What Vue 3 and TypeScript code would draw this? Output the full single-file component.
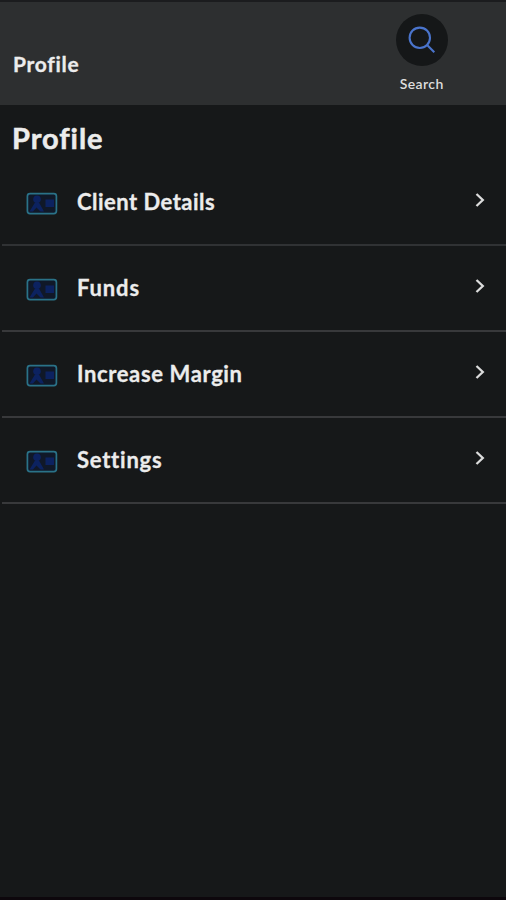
<script setup lang="ts">
interface MenuItem {
  label: string
  key: string
}

const items: MenuItem[] = [
  { label: 'Client Details', key: 'client' },
  { label: 'Funds', key: 'funds' },
  { label: 'Increase Margin', key: 'margin' },
  { label: 'Settings', key: 'settings' },
]
</script>

<template>
  <div class="screen">
    <header class="topbar">
      <span class="topbar-title">Profile</span>
      <button class="search" type="button">
        <span class="search-disc">
          <svg width="28" height="28" viewBox="0 0 28 28" fill="none" stroke="#4a74cc" stroke-width="2.1">
            <circle cx="11.8" cy="11.8" r="10.2" />
            <path d="M19.1 19L26.3 26.2" />
          </svg>
        </span>
        <span class="search-label">Search</span>
      </button>
    </header>
    <main class="content">
      <h1 class="heading">Profile</h1>
      <ul class="menu">
        <li v-for="item in items" :key="item.key" class="row">
          <svg class="card-icon" width="32" height="23" viewBox="0 0 32 23">
            <rect x="1.4" y="1.6" width="29" height="20" rx="2.6" fill="#101828" stroke="#2a7288" stroke-width="1.7" />
            <g fill="#0c2260">
              <circle cx="11" cy="7.3" r="3.8" />
              <path d="M3.5 19.5L9 10.5H13L18 19.5H14.5L10.5 15.5L7 19.5Z" />
              <path d="M19.5 7.5H28V15H19.5Z" />
            </g>
          </svg>
          <span class="label" :class="item.key">{{ item.label }}</span>
          <svg class="chevron" width="10" height="16" viewBox="0 0 10 16" fill="none" stroke="#dcdcdc" stroke-width="2.3">
            <path d="M1.5 2L7.8 8L1.5 14" />
          </svg>
        </li>
      </ul>
    </main>
  </div>
</template>

<style>
body {
  margin: 0;
  background: #161819;
}
</style>

<style scoped>
.screen {
  box-sizing: border-box;
  width: 100%;
  height: 900px;
  display: flex;
  flex-direction: column;
  overflow: hidden;
  border-top: 2px solid #1b1c1e;
  border-bottom: 3px solid #0d070c;
  background: #161819;
  color: #ececec;
  font-family: Lato, "Open Sans", sans-serif;
  font-weight: 700;
}
.topbar {
  box-sizing: border-box;
  height: 103px;
  display: flex;
  justify-content: space-between;
  align-items: flex-start;
  padding: 11.5px 56px 0 13px;
  background: #2d2f30;
}
.topbar-title {
  margin-top: 35.5px;
  font-size: 21px;
  line-height: 30px;
  letter-spacing: 0.7px;
  -webkit-text-stroke: 0.3px currentColor;
}
.search {
  width: 57px;
  display: flex;
  flex-direction: column;
  align-items: center;
  padding: 0;
  border: 0;
  background: none;
  color: #dedede;
  font-family: inherit;
}
.search-disc {
  width: 52px;
  height: 52px;
  display: flex;
  align-items: center;
  justify-content: center;
  border-radius: 50%;
  background: #151718;
}
.search-label {
  margin-top: 9.5px;
  font-size: 14px;
  font-weight: 600;
  line-height: 18px;
  letter-spacing: 0.4px;
  margin-right: -0.4px;
}
.heading {
  height: 55px;
  margin: 0;
  padding-left: 12px;
  font-size: 29px;
  line-height: 66px;
  font-weight: 700;
  letter-spacing: 0.95px;
  -webkit-text-stroke: 0.5px currentColor;
}
.menu {
  list-style: none;
  margin: 0 0 0 2px;
  padding: 0;
}
.row {
  box-sizing: border-box;
  height: 86px;
  display: flex;
  align-items: center;
  padding: 0 21px 0 24px;
  border-bottom: 2px solid #38393b;
}
.row:first-child {
  border-bottom-color: #303234;
}
.card-icon {
  margin-top: 3px;
}
.label {
  flex: 1;
  margin-left: 19px;
  font-size: 22px;
  line-height: 30px;
  letter-spacing: 0.48px;
  -webkit-text-stroke: 0.3px currentColor;
}
.label.funds {
  letter-spacing: 0.85px;
}
.label.margin {
  letter-spacing: 0.62px;
}
.label.settings {
  letter-spacing: 0.75px;
}
.chevron {
  margin-bottom: 4px;
}
</style>
